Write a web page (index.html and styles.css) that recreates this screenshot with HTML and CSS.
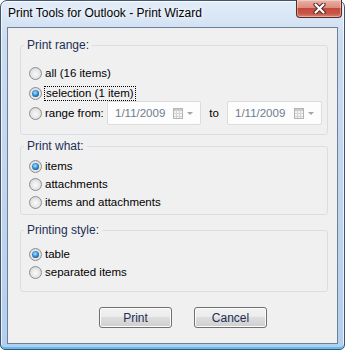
FILE: index.html
```html
<!DOCTYPE html>
<html lang="en">
<head>
    <meta charset="UTF-8">
    <title>Print Wizard</title>
    <link rel="stylesheet" href="styles.css">
</head>
<body>
    <div class="window">
        <div class="titlebar">
            <span class="title">Print Tools for Outlook - Print Wizard</span>
            <button class="close" aria-label="Close">
                <svg width="17" height="11" viewBox="0 0 17 11">
                    <path d="M4.5 1.5 L12.5 9.5 M12.5 1.5 L4.5 9.5" stroke="#4b2a2a" stroke-width="4.2" stroke-linecap="round" fill="none"/>
                    <path d="M4.5 1.5 L12.5 9.5 M12.5 1.5 L4.5 9.5" stroke="#fff" stroke-width="2.2" stroke-linecap="round" fill="none"/>
                </svg>
            </button>
        </div>
        <div class="client">
            <fieldset class="group group-range">
                <legend>Print range:</legend>
                <div class="opt"><span class="radio"></span><span class="lbl">all (16 items)</span></div>
                <div class="opt"><span class="radio on"></span><span class="lbl focus">selection (1 item)</span></div>
                <div class="opt">
                    <span class="range-lbl"><span class="radio"></span><span class="lbl">range from:</span></span>
                    <span class="date">
                        <span class="date-text">1/11/2009</span>
                        <span class="cal"></span>
                        <span class="arrow"></span>
                    </span>
                    <span class="to">to</span>
                    <span class="date date-wide">
                        <span class="date-text">1/11/2009</span>
                        <span class="cal"></span>
                        <span class="arrow"></span>
                    </span>
                </div>
            </fieldset>

            <fieldset class="group group-what">
                <legend>Print what:</legend>
                <div class="opt"><span class="radio on"></span><span class="lbl">items</span></div>
                <div class="opt"><span class="radio"></span><span class="lbl">attachments</span></div>
                <div class="opt"><span class="radio"></span><span class="lbl">items and attachments</span></div>
            </fieldset>

            <fieldset class="group group-style">
                <legend>Printing style:</legend>
                <div class="opt"><span class="radio on"></span><span class="lbl">table</span></div>
                <div class="opt"><span class="radio"></span><span class="lbl">separated items</span></div>
            </fieldset>

            <div class="buttons">
                <button class="btn">Print</button>
                <button class="btn">Cancel</button>
            </div>
        </div>
    </div>
</body>
</html>
```

FILE: styles.css
```css
body {
    margin: 0;
    padding: 0;
    background: #fff;
    font-family: "Liberation Sans", Arial, sans-serif;
    font-size: 11.5px;
    color: #000;
}
.window {
    width: 345px;
    height: 350px;
    box-sizing: border-box;
    display: flex;
    flex-direction: column;
    border: 1px solid #44546a;
    border-radius: 7px 7px 5px 5px;
    padding: 0 6px 5px 6px;
    background: linear-gradient(180deg, #e1ecf8 0%, #cadcf2 12%, #bfd5ef 60%, #b2cff0 100%);
    box-shadow: inset 0 -2px 0 #5cbcef, inset 1px 0 0 rgba(255,255,255,.7), inset -1px 0 0 rgba(255,255,255,.7), inset 0 1px 0 rgba(255,255,255,.8);
}
.titlebar {
    height: 26px;
    display: flex;
    justify-content: space-between;
    align-items: flex-start;
    flex: none;
}
.title {
    margin: 5px 0 0 1px;
    font-size: 12px;
    line-height: 15px;
    text-shadow: 0 0 6px #fff, 0 0 10px #fff;
}
.close {
    width: 46px;
    height: 18px;
    margin: -1px -4px 0 0;
    padding: 0;
    border: 1px solid #5a2b2b;
    border-top: none;
    border-radius: 0 0 4px 4px;
    background: linear-gradient(180deg, #eab1a6 0%, #dd8c7e 45%, #c4493a 50%, #c75848 80%, #d98573 100%);
    box-shadow: inset 0 0 0 1px rgba(255,255,255,.35);
    display: flex;
    align-items: center;
    justify-content: center;
}
.client {
    flex: 1;
    background: #f0f0f0;
    border: 1px solid #6f8095;
    padding: 10px 9px 0 12px;
}
.group {
    margin: 0;
    min-width: 0;
    border: 1px solid #d5dfe5;
    border-radius: 3px;
    padding: 0 4px 0 8px;
}
.group legend {
    margin-left: -5px;
    padding: 0 3px;
    font-size: 12px;
    line-height: 14px;
    color: #1d2f55;
}
.group-range {
    padding-top: 11px;
    padding-bottom: 11px;
}
.group-range .opt {
    height: 20px;
}
.group-what {
    margin-top: 4px;
    padding-top: 4px;
    padding-bottom: 3px;
}
.group-style {
    margin-top: 8px;
    padding-top: 8px;
    padding-bottom: 10px;
}
.opt {
    height: 18px;
    display: flex;
    align-items: center;
}
.radio {
    flex: none;
    width: 13px;
    height: 13px;
    box-sizing: border-box;
    border-radius: 50%;
    border: 1px solid #8c8e90;
    background: radial-gradient(circle at 50% 55%, #fbfbfb 0%, #e8e8e8 45%, #cfcfcf 100%);
}
.radio.on::after {
    content: "";
    display: block;
    width: 7px;
    height: 7px;
    margin: 2px;
    border-radius: 50%;
    background: radial-gradient(circle at 45% 40%, #a8e4ff 0%, #3f9de0 40%, #1a4f86 75%, #10294a 100%);
}
.lbl {
    margin-left: 3px;
    line-height: 15px;
}
.lbl.focus {
    margin-left: 2px;
    padding: 0 1px;
    border: 1px dotted #000;
    line-height: 13px;
}
.range-lbl {
    flex: none;
    width: 78px;
    display: flex;
    align-items: center;
}
.date {
    flex: none;
    width: 94px;
    height: 24px;
    box-sizing: border-box;
    border: 1px solid #dcdcdc;
    border-radius: 2px;
    background: #fdfdfd;
    display: flex;
    align-items: center;
    padding: 0 7px 0 7px;
}
.date-wide {
    width: 95px;
}
.date-text {
    flex: 1;
    color: #6e7b8d;
}
.cal {
    width: 10px;
    height: 11px;
    box-sizing: border-box;
    border: 1px solid #b4b4b4;
    background:
        linear-gradient(90deg, transparent 2px, #d4d4d4 2px, #d4d4d4 3px, transparent 3px, transparent 5px, #d4d4d4 5px, #d4d4d4 6px, transparent 6px),
        linear-gradient(180deg, #c8c8c8 0, #c8c8c8 2px, transparent 2px, transparent 4px, #d4d4d4 4px, #d4d4d4 5px, transparent 5px, transparent 7px, #d4d4d4 7px, #d4d4d4 8px, transparent 8px),
        #f4f4f4;
}
.arrow {
    margin-left: 4px;
    width: 0;
    height: 0;
    border-left: 3px solid transparent;
    border-right: 3px solid transparent;
    border-top: 3px solid #a5a5a5;
}
.to {
    flex: none;
    width: 26px;
    text-align: center;
}
.buttons {
    margin-top: 15px;
    padding-left: 79px;
    display: flex;
    gap: 22px;
}
.btn {
    width: 73px;
    height: 21px;
    padding: 0;
    border: 1px solid #707070;
    border-radius: 3px;
    background: linear-gradient(180deg, #f2f2f2 0%, #ebebeb 50%, #dddddd 50%, #cfcfcf 100%);
    box-shadow: inset 0 0 0 1px #fcfcfc;
    font-family: "Liberation Sans", Arial, sans-serif;
    font-size: 12px;
    color: #1d2f55;
}
```
